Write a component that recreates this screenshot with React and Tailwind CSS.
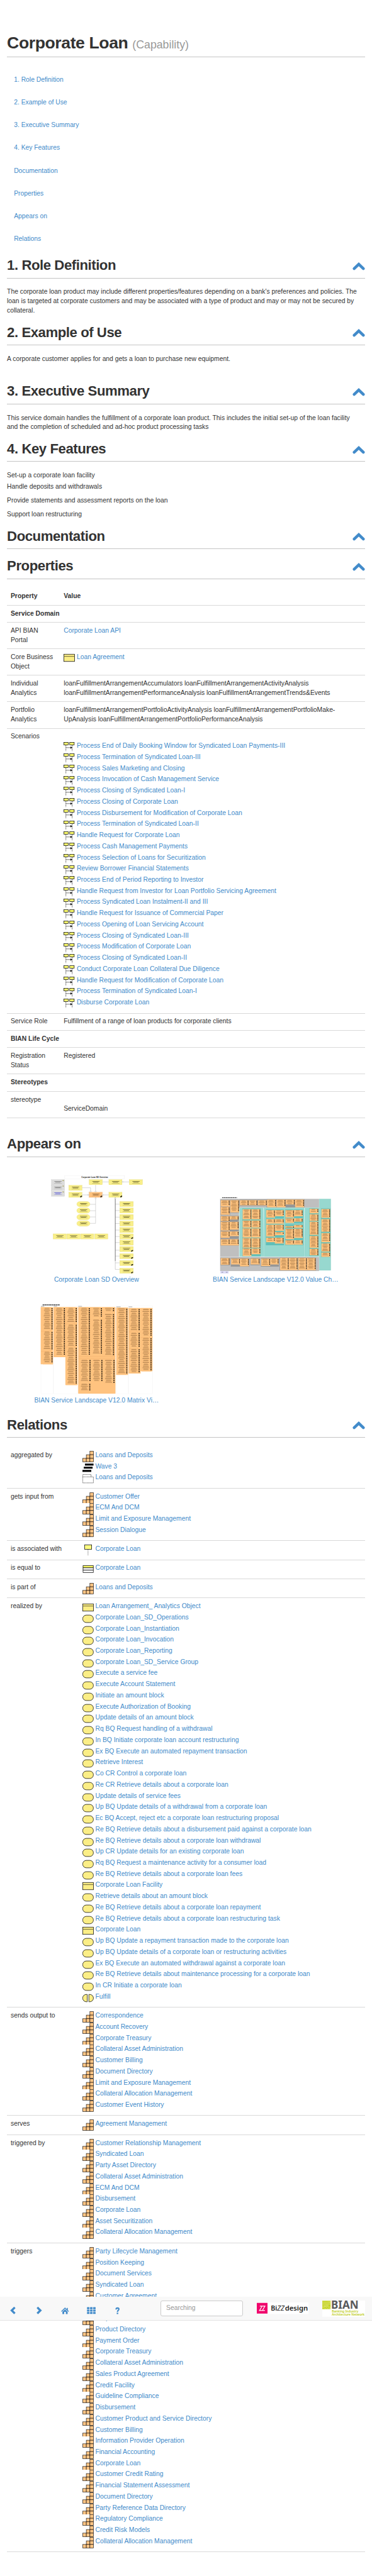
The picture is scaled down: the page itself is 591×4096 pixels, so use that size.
import React from "react";

const NAV = [
  "1. Role Definition",
  "2. Example of Use",
  "3. Executive Summary",
  "4. Key Features",
  "Documentation",
  "Properties",
  "Appears on",
  "Relations",
];

const SCENARIOS = [
  "Process End of Daily Booking Window for Syndicated Loan Payments-III",
  "Process Termination of Syndicated Loan-III",
  "Process Sales Marketing and Closing",
  "Process Invocation of Cash Management Service",
  "Process Closing of Syndicated Loan-I",
  "Process Closing of Corporate Loan",
  "Process Disbursement for Modification of Corporate Loan",
  "Process Termination of Syndicated Loan-II",
  "Handle Request for Corporate Loan",
  "Process Cash Management Payments",
  "Process Selection of Loans for Securitization",
  "Review Borrower Financial Statements",
  "Process End of Period Reporting to Investor",
  "Handle Request from Investor for Loan Portfolio Servicing Agreement",
  "Process Syndicated Loan Instalment-II and III",
  "Handle Request for Issuance of Commercial Paper",
  "Process Opening of Loan Servicing Account",
  "Process Closing of Syndicated Loan-III",
  "Process Modification of Corporate Loan",
  "Process Closing of Syndicated Loan-II",
  "Conduct Corporate Loan Collateral Due Diligence",
  "Handle Request for Modification of Corporate Loan",
  "Process Termination of Syndicated Loan-I",
  "Disburse Corporate Loan",
];

const RELATIONS = [
  {
    label: "aggregated by",
    items: ["Loans and Deposits", ["wave", "Wave 3"], ["group", "Loans and Deposits"]],
  },
  {
    label: "gets input from",
    items: ["Customer Offer", "ECM And DCM", "Limit and Exposure Management", "Session Dialogue"],
  },
  { label: "is associated with", items: [["lifeline", "Corporate Loan"]] },
  { label: "is equal to", items: [["klass", "Corporate Loan"]] },
  { label: "is part of", items: ["Loans and Deposits"] },
  {
    label: "realized by",
    items: [
      ["object", "Loan Arrangement_ Analytics Object"],
      ["service", "Corporate Loan_SD_Operations"],
      ["service", "Corporate Loan_Instantiation"],
      ["service", "Corporate Loan_Invocation"],
      ["service", "Corporate Loan_Reporting"],
      ["service", "Corporate Loan_SD_Service Group"],
      ["service", "Execute a service fee"],
      ["service", "Execute Account Statement"],
      ["service", "Initiate an amount block"],
      ["service", "Execute Authorization of Booking"],
      ["service", "Update details of an amount block"],
      ["service", "Rq BQ Request handling of a withdrawal"],
      ["service", "In BQ Initiate corporate loan account restructuring"],
      ["service", "Ex BQ Execute an automated repayment transaction"],
      ["service", "Retrieve Interest"],
      ["service", "Co CR Control a corporate loan"],
      ["service", "Re CR Retrieve details about a corporate loan"],
      ["service", "Update details of service fees"],
      ["service", "Up BQ Update details of a withdrawal from a corporate loan"],
      ["service", "Ec BQ Accept, reject etc a corporate loan restructuring proposal"],
      ["service", "Re BQ Retrieve details about a disbursement paid against a corporate loan"],
      ["service", "Re BQ Retrieve details about a corporate loan withdrawal"],
      ["service", "Up CR Update details for an existing corporate loan"],
      ["service", "Rq BQ Request a maintenance activity for a consumer load"],
      ["service", "Re BQ Retrieve details about a corporate loan fees"],
      ["object", "Corporate Loan Facility"],
      ["service", "Retrieve details about an amount block"],
      ["service", "Re BQ Retrieve details about a corporate loan repayment"],
      ["service", "Re BQ Retrieve details about a corporate loan restructuring task"],
      ["object", "Corporate Loan"],
      ["service", "Up BQ Update a repayment transaction made to the corporate loan"],
      ["service", "Up BQ Update details of a corporate loan or restructuring activities"],
      ["service", "Ex BQ Execute an automated withdrawal against a corporate loan"],
      ["service", "Re BQ Retrieve details about maintenance processing for a corporate loan"],
      ["service", "In CR Initiate a corporate loan"],
      ["fn", "Fulfill"],
    ],
  },
  {
    label: "sends output to",
    items: [
      "Correspondence",
      "Account Recovery",
      "Corporate Treasury",
      "Collateral Asset Administration",
      "Customer Billing",
      "Document Directory",
      "Limit and Exposure Management",
      "Collateral Allocation Management",
      "Customer Event History",
    ],
  },
  { label: "serves", items: ["Agreement Management"] },
  {
    label: "triggered by",
    items: [
      "Customer Relationship Management",
      "Syndicated Loan",
      "Party Asset Directory",
      "Collateral Asset Administration",
      "ECM And DCM",
      "Disbursement",
      "Corporate Loan",
      "Asset Securitization",
      "Collateral Allocation Management",
    ],
  },
  {
    label: "triggers",
    items: [
      "Party Lifecycle Management",
      "Position Keeping",
      "Document Services",
      "Syndicated Loan",
      "Customer Agreement",
      "",
      "Corporate Current Account",
      "Product Directory",
      "Payment Order",
      "Corporate Treasury",
      "Collateral Asset Administration",
      "Sales Product Agreement",
      "Credit Facility",
      "Guideline Compliance",
      "Disbursement",
      "Customer Product and Service Directory",
      "Customer Billing",
      "Information Provider Operation",
      "Financial Accounting",
      "Corporate Loan",
      "Customer Credit Rating",
      "Financial Statement Assessment",
      "Document Directory",
      "Party Reference Data Directory",
      "Regulatory Compliance",
      "Credit Risk Models",
      "Collateral Allocation Management",
    ],
  },
];

const ICONS = {
  capability: (
    <g fill="#ffc685" stroke="#000" strokeWidth="1" strokeOpacity="0.85">
      <rect x="16" y="0.5" width="7.5" height="7.8" />
      <rect x="8.3" y="8.3" width="7.7" height="7.7" />
      <rect x="16" y="8.3" width="7.5" height="7.7" />
      <rect x="0.5" y="16" width="7.8" height="7.5" />
      <rect x="8.3" y="16" width="7.7" height="7.5" />
      <rect x="16" y="16" width="7.5" height="7.5" />
    </g>
  ),
  wave: (
    <g fill="#000">
      <rect x="5.3" y="3" width="18.5" height="4.2" />
      <rect x="2.8" y="9.8" width="19" height="4" />
      <rect x="0" y="16.6" width="19" height="4.2" />
    </g>
  ),
  group: (
    <g fill="none" stroke="#333" strokeWidth="1" strokeDasharray="2 1">
      <path d="M0.5 8.5V3.5H18.5V8.5" />
      <rect x="0.5" y="8.5" width="23" height="13" />
    </g>
  ),
  lifeline: (
    <g stroke="#000">
      <rect x="4.5" y="0.8" width="15.3" height="9.4" fill="#ffff80" />
      <path d="M12 11V24" strokeDasharray="1.4 1.2" strokeOpacity="0.8" />
    </g>
  ),
  klass: (
    <g stroke="#000">
      <rect x="1.3" y="4.6" width="22" height="4.8" fill="#ffff66" />
      <rect x="1.3" y="9.4" width="22" height="5" fill="#fff" />
      <rect x="1.3" y="14.4" width="22" height="5" fill="#fff" />
    </g>
  ),
  object: (
    <g stroke="#000">
      <rect x="0.5" y="4.4" width="23" height="15.6" fill="#fbee86" />
      <path d="M0.5 9H23.5" stroke="#6f6a3a" strokeWidth="1.4" />
    </g>
  ),
  service: <rect x="0.5" y="4.2" width="23" height="16" rx="7.8" fill="#fbee86" stroke="#000" />,
  fn: (
    <g stroke="#000" fill="#fbee86">
      <path d="M10.3 4.4H8.3A7.9 7.9 0 0 0 8.3 20.2H10.3Z" />
      <path d="M13.8 4.4H15.7A7.9 7.9 0 0 1 15.7 20.2H13.8Z" />
    </g>
  ),
  sequence: (
    <g stroke="#000">
      <path d="M5 9V22M18.5 9V22" strokeDasharray="3 1" strokeOpacity="0.8" />
      <path d="M5 14.6H15" strokeOpacity="0.7" />
      <path d="M15 12.6L18.5 14.6L15 16.6Z" fill="#000" strokeWidth="0.5" />
      <rect x="0.6" y="3.4" width="9.6" height="5.2" fill="#ffff70" />
      <rect x="13.2" y="3.4" width="9.6" height="5.2" fill="#ffff70" />
    </g>
  ),
};

function Icon({ name, className = "" }) {
  return (
    <svg width="24" height="24" viewBox="0 0 24 24" className={"shrink-0 " + className}>
      {ICONS[name]}
    </svg>
  );
}

function SectionHeader({ children }) {
  return (
    <div className="mt-5 flex h-11 items-start justify-between border-b border-[#c4c4c4]">
      <h2 className="text-[30px] leading-[33px] font-bold tracking-[-0.6px]">{children}</h2>
      <svg width="27" height="18" viewBox="0 0 27 18" className="mt-[9px]">
        <path d="M3.6 13.7L13.5 4.2L23.4 13.7" fill="none" stroke="#428bca" strokeWidth="6" strokeLinecap="round" />
      </svg>
    </div>
  );
}

function Link({ children, className = "" }) {
  return <a className={"text-[#428bca] " + className}>{children}</a>;
}

function Row({ label, h, bold, children }) {
  return (
    <div className={"flex border-b border-[#d9d9d9] px-2 pt-2 " + h}>
      <div className={bold ? "font-bold whitespace-nowrap" : "w-[114px] shrink-0 pr-4"}>{label}</div>
      <div>{children}</div>
    </div>
  );
}

/* Orange block of a landscape map: tiny label strokes with a marker on each line. */
function Stack({ x, y, w, h, pitch = 10, mark = 7 }) {
  const n = Math.max(1, Math.floor((h - 2) / pitch));
  const rows = [];
  for (let i = 0; i < n; i++) {
    const cy = y + 5 + i * pitch;
    const lw = w * (0.42 + 0.22 * (((i * 7 + x) % 5) / 4));
    rows.push(
      <g key={i}>
        <rect x={x + (w - mark - lw) / 2} y={cy - 2.5} width={lw * 0.9} height="1.6" fill="#a67a4a" />
        <rect x={x + (w - mark - lw) / 2 - 1} y={cy + 1.2} width={lw + 2} height="1.8" fill="#8a6236" />
        <rect x={x + w - mark + 0.5} y={cy - 1} width={mark - 1.5} height="6" fill="#1b130b" />
      </g>
    );
  }
  return (
    <g>
      <rect x={x} y={y} width={w} height={h} fill="#ffc37f" />
      {rows}
    </g>
  );
}

const OVERVIEW_YELLOW = [
  [375, 257], [458, 257], [544, 257], [289, 289], [289, 328], [458, 328],
  [223, 562], [281, 562], [339, 562], [398, 562],
];
const OVERVIEW_RIGHT = [380, 416, 453, 490, 526, 562, 597, 633, 673, 712, 755];

function MiniLabel({ x, y, color = "#5c5626" }) {
  return (
    <g fill={color}>
      <rect x={x + 13} y={y + 9} width="31" height="2.4" />
      <rect x={x + 17} y={y + 14} width="22" height="2.4" />
      <rect x={x + 12} y={y + 19} width="33" height="2" opacity="0.5" />
    </g>
  );
}

function OverviewThumb() {
  return (
    <svg width="205" height="217" viewBox="206 230 402 567" preserveAspectRatio="none">
      <rect x="272" y="236" width="252" height="18" fill="#fff" stroke="#e6e6e6" />
      <text x="342" y="246.5" fontSize="10.5" fontWeight="bold" textLength="112" lengthAdjust="spacingAndGlyphs" fill="#111">
        Corporate Loan SD Overview
      </text>
      <g stroke="#aaa" fill="none" strokeWidth="1.4">
        <path d="M430 270H458M514 270H544M402 286V328M345 303H381V328M345 343H375M430 343H458" />
        <path d="M402 358V503M378 396H402M378 432H402M378 467H402M378 503H402" />
        <path d="M485 395H504M485 431H504M485 468H504M485 504H504M485 541H504M485 577H504M485 611H504M485 654H504M485 687H504M485 725H504M485 762H504" />
      </g>
      <path d="M485 358V715" stroke="#444" strokeWidth="2.2" />
      <path d="M485 715V762" stroke="#999" strokeWidth="1.4" />
      {[257, 288, 321].map((y, i) => (
        <g key={y}>
          <rect x="216" y={y} width="55" height="30" fill="#dcdcdc" stroke="#c9c9c9" />
          <MiniLabel x={215} y={y} color={i === 2 ? "#4b4bd8" : "#777"} />
          <rect x="263" y={y + 3} width="5" height="5" fill="#a9a25c" />
        </g>
      ))}
      {OVERVIEW_YELLOW.map(([x, y]) => (
        <g key={x + "-" + y}>
          <rect x={x} y={y} width="55.5" height="29" fill="#faf08a" stroke="#e0d56c" />
          <path d={`M${x} ${y + 6}h55`} stroke="#e6db78" />
          <MiniLabel x={x} y={y} />
        </g>
      ))}
      <rect x="375" y="328" width="55" height="29" fill="#ffc27e" stroke="#e3a15c" />
      <MiniLabel x={375} y={328} color="#7a5127" />
      {[380, 416, 453, 489].map((y) => (
        <g key={y}>
          <rect x="323" y={y} width="55" height="30" rx="14" fill="#faf08a" stroke="#e0d56c" />
          <MiniLabel x={323} y={y} />
        </g>
      ))}
      {OVERVIEW_RIGHT.map((y, i) => (
        <g key={y}>
          <rect x="504" y={y} width="57" height="29" fill="#faf08a" stroke="#e0d56c" />
          <path d={`M504 ${y + 6}h57`} stroke="#e6db78" />
          <MiniLabel x={504} y={y} />
          {i > 4 && i !== 6 && <path d={`M552 ${y + 28}v-5h3v-3h5v5h-3v3z`} fill="#111" />}
        </g>
      ))}
      <path d="M337 356v-5h3v-3h5v5h-3v3zM422 356v-5h3v-3h5v5h-3v3zM506 356v-5h3v-3h5v5h-3v3z" fill="#111" />
      <g fill="#fff" stroke="#999">
        <circle cx="371" cy="343" r="3" />
        <circle cx="433" cy="343" r="3" />
        <circle cx="402" cy="324" r="3" />
        <circle cx="381" cy="324" r="3" />
        <circle cx="402" cy="362" r="3" />
        <circle cx="485" cy="362" r="3" />
        <circle cx="516" cy="270" r="3" />
      </g>
    </svg>
  );
}

const VALUE_STACKS = [
  [27, 38, 58, 41], [88, 38, 58, 79], [27, 82, 58, 50], [27, 141, 58, 32], [85, 141, 58, 22],
  [27, 178, 58, 56], [85, 178, 58, 50], [27, 240, 58, 41], [85, 240, 58, 30], [27, 290, 58, 40], [85, 290, 58, 40],
  [151, 38, 56, 33], [208, 38, 56, 33], [267, 38, 58, 33], [326, 34, 58, 50], [387, 34, 58, 50], [447, 34, 58, 32], [507, 34, 58, 50],
  [168, 96, 57, 66], [226, 96, 57, 66], [168, 169, 57, 47], [226, 169, 57, 47], [168, 220, 57, 59], [226, 220, 57, 59],
  [168, 283, 57, 62], [226, 283, 57, 62], [168, 349, 57, 50], [226, 349, 57, 38],
  [320, 102, 57, 49], [377, 102, 57, 40], [320, 160, 57, 30], [377, 160, 57, 30], [320, 196, 57, 77], [377, 196, 57, 40],
  [377, 244, 57, 20], [320, 280, 57, 29], [376, 280, 57, 38],
  [444, 102, 56, 48], [500, 102, 56, 40], [444, 155, 56, 30], [500, 155, 56, 22], [444, 205, 56, 11], [500, 198, 56, 18],
  [444, 222, 56, 68], [500, 222, 56, 60], [444, 296, 56, 30], [500, 296, 56, 30],
  [600, 93, 57, 30], [600, 129, 57, 43], [600, 177, 57, 85], [600, 269, 57, 77], [600, 352, 57, 42],
  [676, 95, 57, 57], [676, 160, 57, 82], [676, 250, 57, 60], [676, 317, 57, 53], [676, 376, 57, 28],
  [27, 412, 58, 43], [94, 415, 58, 38], [151, 415, 58, 50], [220, 415, 58, 38], [288, 415, 58, 48], [346, 415, 55, 38],
  [410, 411, 56, 79], [467, 411, 56, 79], [527, 411, 56, 79], [584, 411, 56, 79],
];

function ValueChainThumb() {
  return (
    <svg width="255" height="175" viewBox="0 0 765 525">
      <path d="M36 22H132" stroke="#222" strokeWidth="4" strokeDasharray="10 1.5" />
      <g fill="#bfbfbf" stroke="#b0b0b0">
        <rect x="24" y="30" width="637" height="372" />
        <rect x="24" y="405" width="637" height="90" />
      </g>
      <g fill="#969696">
        <rect x="25" y="36" width="122" height="44" />
        <rect x="86" y="36" width="61" height="84" />
        <rect x="25" y="80" width="62" height="54" />
        <rect x="25" y="138" width="122" height="98" />
        <rect x="25" y="236" width="122" height="50" />
        <rect x="25" y="286" width="122" height="45" />
        <rect x="149" y="34" width="180" height="41" />
        <rect x="323" y="32" width="244" height="54" />
        <rect x="25" y="410" width="62" height="48" />
        <rect x="92" y="411" width="120" height="56" />
        <rect x="218" y="411" width="62" height="47" />
        <rect x="286" y="411" width="117" height="56" />
        <rect x="407" y="408" width="235" height="84" />
      </g>
      <rect x="145" y="86" width="516" height="318" fill="#d3f0ec" />
      <g fill="#97d8cf" stroke="#6cc5ba">
        <path d="M150 88H300L304 400H150Z" />
        <rect x="307" y="88" width="257" height="313" />
        <path d="M571 88H659V401H567Z" />
        <rect x="663" y="30" width="74" height="461" />
      </g>
      <g fill="#60bfb9">
        <rect x="166" y="91" width="119" height="309" />
        <rect x="318" y="98" width="117" height="56" />
        <rect x="318" y="156" width="117" height="36" />
        <rect x="318" y="193" width="117" height="136" />
        <rect x="442" y="98" width="117" height="54" />
        <rect x="442" y="152" width="117" height="36" />
        <rect x="442" y="194" width="117" height="135" />
        <rect x="598" y="90" width="61" height="307" />
        <rect x="674" y="91" width="61" height="314" />
      </g>
      {VALUE_STACKS.map(([x, y, w, h], i) => (
        <Stack key={i} x={x} y={y} w={w} h={h} />
      ))}
      <rect x="24" y="496" width="54" height="15" fill="#dcdcf8" />
      <path d="M32 499h11v8h-11zM60 499h11v8h-11z" fill="#b4b4cc" />
    </svg>
  );
}

const MATRIX_STACKS = [
  [181, 975, 42, 125], [181, 1108, 42, 112], [181, 1222, 42, 72],
  [232, 975, 43, 275],
  [280, 975, 45, 90], [280, 1068, 45, 128], [280, 1198, 45, 210],
  [337, 975, 43, 275], [388, 975, 43, 60], [388, 1040, 43, 200], [439, 975, 43, 30], [439, 1008, 43, 242],
  [337, 1266, 46, 128], [388, 1266, 45, 125], [439, 1266, 45, 135], [337, 1400, 45, 50],
  [494, 978, 44, 372], [546, 980, 44, 130], [546, 1114, 44, 90], [546, 1206, 44, 135],
  [597, 980, 43, 162], [597, 1144, 43, 190],
];

function MatrixThumb() {
  return (
    <svg width="247" height="201.5" viewBox="165 950 484 526.5" preserveAspectRatio="none">
      <path d="M180 960H252" stroke="#222" strokeWidth="4" strokeDasharray="8 1.2" />
      <g fill="none" stroke="#efefef">
        <rect x="173" y="967" width="52" height="493" />
        <rect x="226" y="967" width="102" height="493" />
        <rect x="489" y="967" width="52" height="493" />
        <rect x="542" y="967" width="101" height="493" />
      </g>
      <path d="M173 968h14M227 968h14M330 968h16M491 971h18M543 971h15" stroke="#999" strokeWidth="2.5" />
      <g fill="#ffc37f">
        <rect x="172" y="972" width="52" height="322" rx="2" />
        <rect x="226" y="972" width="51" height="282" rx="2" />
        <rect x="276" y="972" width="51" height="439" rx="2" />
        <rect x="330" y="972" width="157" height="487" rx="2" />
        <rect x="490" y="975" width="50" height="379" rx="2" />
        <rect x="542" y="977" width="51" height="369" rx="2" />
        <rect x="592" y="977" width="51" height="356" rx="2" />
      </g>
      {MATRIX_STACKS.map(([x, y, w, h], i) => (
        <Stack key={i} x={x} y={y} w={w} h={h} pitch={10.2} mark={6} />
      ))}
      <path d="M331 1250H487M331 1262H487M173 1108H223M173 1221H223M277 1067H326M277 1197H326M543 1112H592M543 1206H592M592 1143H643" stroke="#e9a965" />
    </svg>
  );
}

function Thumb({ image, caption, h }) {
  return (
    <div className={"flex w-[385px] flex-col items-center justify-end " + h}>
      {image}
      <Link>{caption}</Link>
    </div>
  );
}

function Toolbar() {
  return (
    <div className="absolute top-[4942px] left-0 flex h-[51px] w-[800px] items-start border-b border-[#e4e4e4] bg-[#f8f8f8]">
      <svg width="270" height="50" viewBox="0 0 270 50" className="mr-[75px]">
        <g fill="none" stroke="#428bca" strokeWidth="4.6">
          <path d="M31.8 22.8L25.2 29.4L31.8 36" />
          <path d="M80.2 22.8L86.8 29.4L80.2 36" />
        </g>
        <g fill="#428bca">
          <path d="M139.8 23L131.4 31.2L132.8 32.4L139.8 25.7L146.8 32.4L148.2 31.2L145.8 28.8V24H143.6V26.6Z" />
          <path d="M139.8 27.2L134.2 32.6V37.2H138V32.6H141.6V37.2H145.4V32.6Z" />
          {[187, 193.6, 200.2].map((x) =>
            [22.4, 27.6, 32.8].map((y) => <rect key={x + "-" + y} x={x} y={y} width="5.4" height="4.2" rx="0.6" />)
          )}
        </g>
        <path d="M249.6 27.4C249.6 24.6 250.8 24.2 252.8 24.2C255 24.2 255.6 25.2 255.6 26.8C255.6 29.2 252.6 29 252.6 32.6" fill="none" stroke="#428bca" strokeWidth="2.9" />
        <rect x="251" y="34" width="3.2" height="3.2" fill="#428bca" />
      </svg>
      <div className="mt-2 flex h-[34px] w-[177px] items-center rounded border border-[#ccc] bg-white pl-[11px] text-[#999]">
        Searching
      </div>
      <svg width="111" height="25" viewBox="0 0 111 25" className="mt-[12px] ml-[30px] overflow-visible">
        <rect width="111" height="25" fill="#fff" />
        <rect y="1" width="23" height="23" fill="#f0046c" />
        <path d="M6.5 8H11.6L5.6 17.5H11M12.5 8H17.6L11.8 17.5H17.4" fill="none" stroke="#fff" strokeWidth="1.5" />
        <g fill="#1d1d1b" fontFamily="Noto Sans, sans-serif" fontSize="15" fontWeight="600">
          <text x="30" y="18" textLength="13.5" lengthAdjust="spacingAndGlyphs">Bi</text>
          <text x="43.5" y="18" textLength="16" lengthAdjust="spacingAndGlyphs" fontStyle="italic" fontWeight="400">ZZ</text>
          <text x="60.5" y="18" textLength="49.5" lengthAdjust="spacingAndGlyphs">design</text>
        </g>
      </svg>
      <svg width="92" height="35" viewBox="0 0 92 35" className="mt-[7.5px] ml-[30px] overflow-visible">
        <rect width="92" height="35" fill="#fff" />
        <rect y="0.5" width="18" height="18" fill="#c3d11c" />
        <g fill="none" stroke="#f1f5c0" strokeWidth="0.7">
          <path d="M0 3.5Q9 5 18 2.5M0 6.5Q11 8 18 4.5M0 9.5Q13 10 18 7M0 12.5Q9 12 12 18.5M0 15Q6 15 8 18.5M4 12Q13 11 15.5 18.5M9 10.5Q16 11 17.8 18" />
        </g>
        <text x="19" y="17.6" fontFamily="Noto Sans, sans-serif" fontWeight="bold" fontSize="23.5" textLength="59" lengthAdjust="spacingAndGlyphs" fill="#58595b">
          BIAN
        </text>
        <g fontFamily="Noto Sans, sans-serif" fontWeight="600" fontSize="6.6" fill="#bccb12">
          <text x="20.5" y="26.3" textLength="57" lengthAdjust="spacingAndGlyphs">Banking Industry</text>
          <text x="20.5" y="33" textLength="70.5" lengthAdjust="spacingAndGlyphs">Architecture Network</text>
        </g>
      </svg>
    </div>
  );
}

export default function App() {
  return (
    <div className="h-[4096px] w-[591px] overflow-hidden bg-white">
      <div className="relative h-[5542px] w-[800px] px-[15px] font-['Liberation_Sans',Arial,sans-serif] text-[14px] leading-5 text-[#333] [zoom:0.739]">
        <header className="flex h-[123px] items-end border-b border-[#c4c4c4] pb-[9px]">
          <h1 className="text-[36px] leading-10 font-bold tracking-[-0.55px]">
            Corporate Loan <span className="text-[24px] leading-none font-normal tracking-normal text-[#999]">(Capability)</span>
          </h1>
        </header>

        <nav className="h-[412px] pt-[24.5px]">
          {NAV.map((n) => (
            <div key={n} className="flex h-[49px] items-center pl-[15px]">
              <Link>{n}</Link>
            </div>
          ))}
        </nav>

        <SectionHeader>1. Role Definition</SectionHeader>
        <div className="h-20 pt-5 whitespace-nowrap">
          <p>The corporate loan product may include different properties/features depending on a bank's preferences and policies. The</p>
          <p>loan is targeted at corporate customers and may be associated with a type of product and may or may not be secured by</p>
          <p>collateral.</p>
        </div>

        <SectionHeader>2. Example of Use</SectionHeader>
        <p className="h-[63px] pt-5">A corporate customer applies for and gets a loan to purchase new equipment.</p>

        <SectionHeader>3. Executive Summary</SectionHeader>
        <div className="h-[60px] pt-5 whitespace-nowrap">
          <p>This service domain handles the fulfillment of a corporate loan product. This includes the initial set-up of the loan facility</p>
          <p>and the completion of scheduled and ad-hoc product processing tasks</p>
        </div>

        <SectionHeader>4. Key Features</SectionHeader>
        <div className="h-[124px] pt-5">
          <p>Set-up a corporate loan facility</p>
          <p className="mt-1">Handle deposits and withdrawals</p>
          <p className="mt-2.5">Provide statements and assessment reports on the loan</p>
          <p className="mt-2.5">Support loan restructuring</p>
        </div>

        <SectionHeader>Documentation</SectionHeader>
        <SectionHeader>Properties</SectionHeader>

        <div className="mt-5 h-[1160px]">
          <Row label={<b>Property</b>} h="h-[37px]"><b>Value</b></Row>
          <Row label="Service Domain" h="h-[37px]" bold />
          <Row label="API BIAN Portal" h="h-[57px]"><Link>Corporate Loan API</Link></Row>
          <Row label="Core Business Object" h="h-[57px]">
            <div className="flex h-5 items-start">
              <Icon name="object" className="-mt-px" />
              <Link className="ml-1">Loan Agreement</Link>
            </div>
          </Row>
          <Row label="Individual Analytics" h="h-[57px]">
            loanFulfillmentArrangementAccumulators loanFulfillmentArrangementActivityAnalysis
            <br />
            loanFulfillmentArrangementPerformanceAnalysis loanFulfillmentArrangementTrends&amp;Events
          </Row>
          <Row label="Portfolio Analytics" h="h-[57px]">
            loanFulfillmentArrangementPortfolioActivityAnalysis loanFulfillmentArrangementPortfolioMake-
            <br />
            UpAnalysis loanFulfillmentArrangementPortfolioPerformanceAnalysis
          </Row>
          <Row label="Scenarios" h="h-[613px]">
            <div className="pt-5">
              {SCENARIOS.map((s) => (
                <div key={s} className="flex h-6 items-start">
                  <Icon name="sequence" className="-mt-px" />
                  <Link className="ml-1">{s}</Link>
                </div>
              ))}
            </div>
          </Row>
          <Row label="Service Role" h="h-[37px]">Fulfillment of a range of loan products for corporate clients</Row>
          <Row label="BIAN Life Cycle" h="h-[37px]" bold />
          <Row label="Registration Status" h="h-[57px]">Registered</Row>
          <Row label="Stereotypes" h="h-[37px]" bold />
          <Row label="stereotype" h="h-[57px]">
            <p className="pt-5">ServiceDomain</p>
          </Row>
        </div>

        <SectionHeader>Appears on</SectionHeader>
        <div className="flex h-[540px] flex-wrap content-start">
          <Thumb h="h-[275px]" image={<OverviewThumb />} caption="Corporate Loan SD Overview" />
          <Thumb h="h-[275px]" image={<ValueChainThumb />} caption="BIAN Service Landscape V12.0 Value Ch…" />
          <Thumb h="h-[260px]" image={<MatrixThumb />} caption="BIAN Service Landscape V12.0 Matrix Vi…" />
        </div>

        <SectionHeader>Relations</SectionHeader>
        <div className="mt-5">
          {RELATIONS.map((r) => (
            <div
              key={r.label}
              className="flex border-b border-[#d9d9d9] px-2 pt-2"
              style={{ height: r.items.length * 24 + 17 }}
            >
              <div className="w-[154px] shrink-0">{r.label}</div>
              <div>
                {r.items.map((it, i) => {
                  const [icon, text] = Array.isArray(it) ? it : ["capability", it];
                  return (
                    <div key={i} className="flex h-6 items-start whitespace-nowrap">
                      <Icon name={icon} />
                      <Link className="ml-1">{text}</Link>
                    </div>
                  );
                })}
              </div>
            </div>
          ))}
        </div>

        <Toolbar />
      </div>
    </div>
  );
}
